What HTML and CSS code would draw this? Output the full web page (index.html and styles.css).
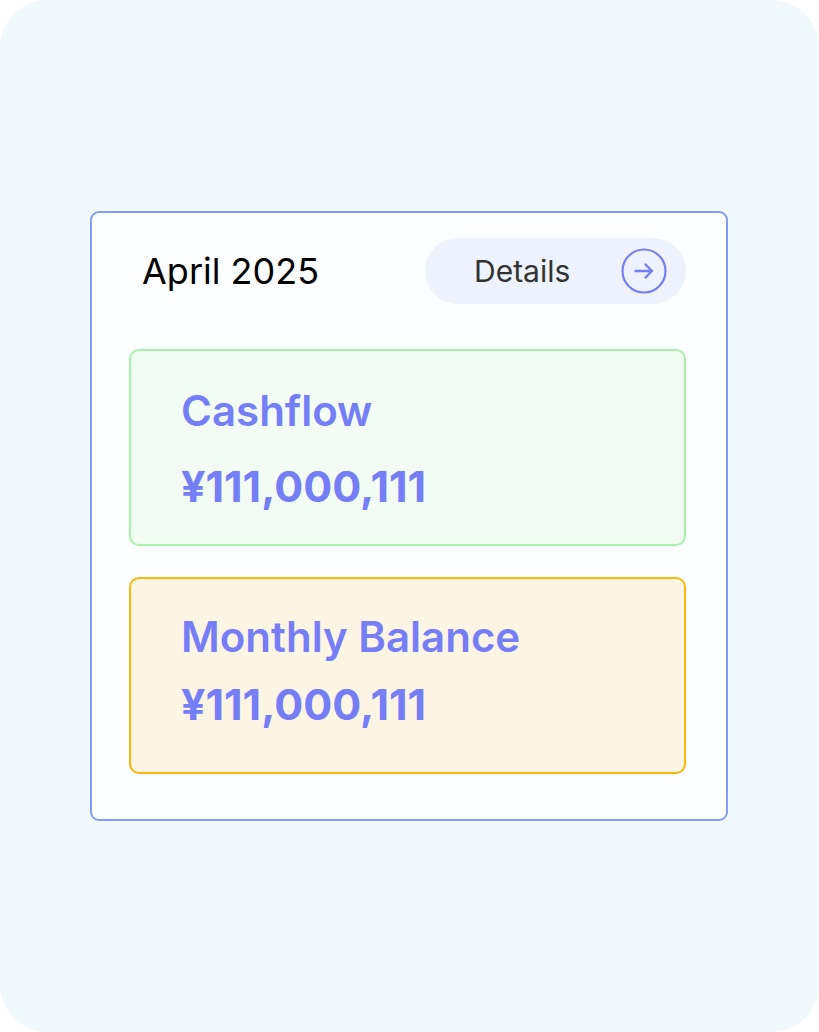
FILE: index.html
```html
<!DOCTYPE html>
<html lang="en">
<head>
<meta charset="utf-8">
<title>April 2025</title>
<link rel="stylesheet" href="styles.css">
</head>
<body>
<div class="screen">
  <section class="card">
    <header class="card-header">
      <h1 class="month">April 2025</h1>
      <button class="details-btn" type="button">
        <span class="details-label">Details</span>
        <svg class="details-icon" width="46" height="46" viewBox="0 0 46 46" aria-hidden="true">
          <circle cx="23" cy="23" r="21.5" fill="none" stroke="#757EF6" stroke-width="2.2"/>
          <path d="M14.5 23 H31 M24.5 16.5 L31 23 L24.5 29.5" fill="none" stroke="#757EF6" stroke-width="2.4" stroke-linecap="round" stroke-linejoin="round"/>
        </svg>
      </button>
    </header>
    <div class="stat stat-cashflow">
      <div class="stat-title">Cashflow</div>
      <div class="stat-value">¥111,000,111</div>
    </div>
    <div class="stat stat-balance">
      <div class="stat-title">Monthly Balance</div>
      <div class="stat-value">¥111,000,111</div>
    </div>
  </section>
</div>
</body>
</html>
```

FILE: styles.css
```css
* { box-sizing: border-box; }
html, body { margin: 0; padding: 0; background: #ffffff; }
body { font-family: Inter, "Noto Sans", "Liberation Sans", sans-serif; }

.screen {
  width: 819px;
  height: 1032px;
  border-radius: 48px;
  background: #F2F9FC;
  display: flex;
  align-items: center;
  justify-content: center;
}

.card {
  width: 638px;
  height: 610px;
  margin-top: -1px;
  margin-left: -1px;
  border: 2px solid #809CF6;
  border-radius: 9px;
  background: #FDFEFF;
  padding: 25px 40px 0 37px;
  display: flex;
  flex-direction: column;
}

.card-header {
  display: flex;
  align-items: center;
  justify-content: space-between;
  height: 66px;
  margin-bottom: 45px;
}

.month {
  margin: 0 0 0 13px;
  font-size: 36px;
  font-weight: 400;
  color: #000;
  letter-spacing: 0;
}

.details-btn {
  width: 261px;
  height: 66px;
  border: 0;
  border-radius: 33px;
  background: #EEF2FD;
  display: flex;
  align-items: center;
  justify-content: space-between;
  padding: 0 19px 0 49px;
  font-family: inherit;
  cursor: pointer;
}

.details-label {
  font-size: 30px;
  font-weight: 400;
  color: #333333;
}

.details-icon { display: block; }

.stat {
  width: 557px;
  height: 197px;
  border-radius: 10px;
  border: 2.5px solid;
  padding-left: 50px;
  color: #757EF6;
}

.stat-cashflow {
  border-color: #A7F3A7;
  background: #F2FCF4;
  padding-top: 32px;
  margin-bottom: 31px;
}

.stat-balance {
  border-color: #FBB807;
  background: #FDF5E3;
  padding-top: 30px;
}

.stat-title {
  font-size: 42px;
  font-weight: 600;
  line-height: 56px;
}

.stat-value {
  font-size: 43px;
  font-weight: 700;
  line-height: 56px;
  margin-top: 19px;
}

.stat-balance .stat-value { margin-top: 11px; }
```
